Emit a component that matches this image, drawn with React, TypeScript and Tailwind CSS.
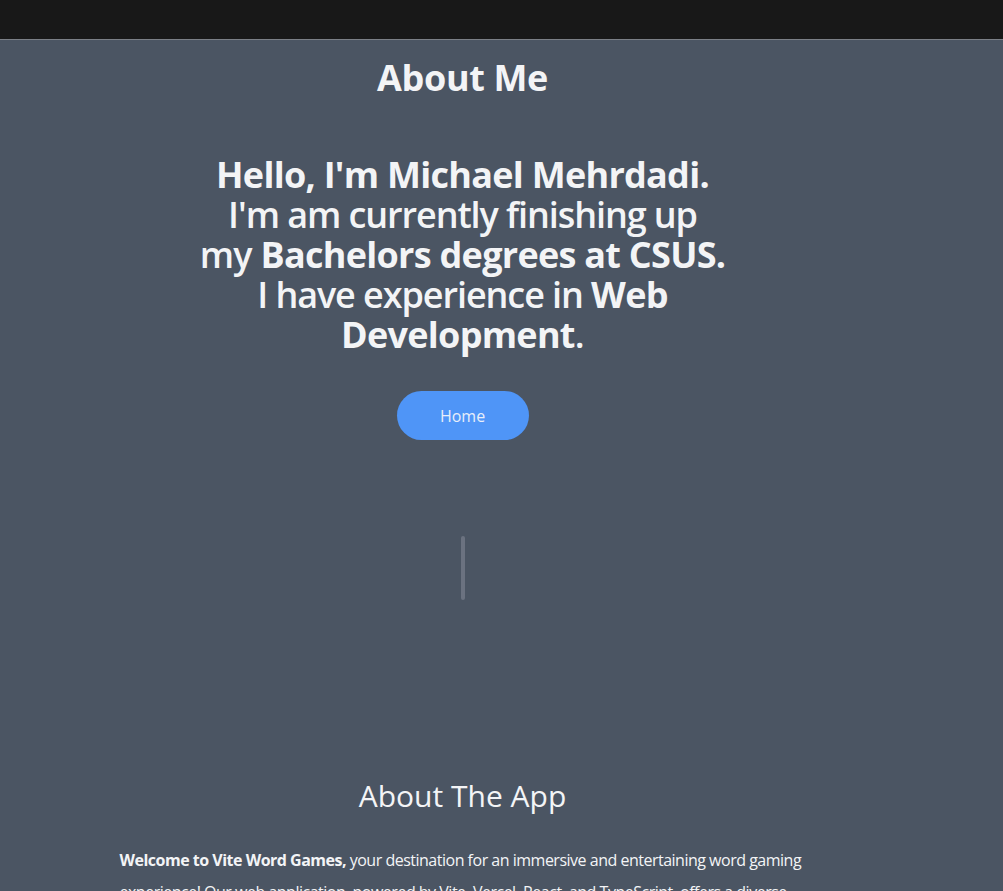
import React from "react";

export default function App() {
  return (
    <div className="min-h-[891px] bg-[#4b5563] text-[#f3f4f6]" style={{ fontFamily: '"Open Sans", "Noto Sans", sans-serif' }}>
      <div className="h-[40px] bg-[#181818] border-b border-[#7b7f86]" />
      <div className="w-[925px] flex flex-col items-center">
        <h1 className="mt-[18px] text-4xl leading-10 font-bold tracking-[-0.01em]">About Me</h1>
        <div className="mt-[57px] text-4xl leading-10 text-center tracking-[-0.02em]">
          <p className="font-bold">Hello, I'm Michael Mehrdadi.</p>
          <p className="font-semibold tracking-[-0.03em]">I'm am currently finishing up</p>
          <p className="font-semibold">my <span className="font-bold">Bachelors degrees at CSUS.</span></p>
          <p className="font-semibold"><span className="tracking-[-0.03em]">I have experience in </span><span className="font-bold">Web</span></p>
          <p className="font-semibold"><span className="font-bold">Development</span>.</p>
        </div>
        <button className="mt-[36px] w-[132px] h-[49px] rounded-full bg-[#4f95f7] text-base text-[#e8eefa]">Home</button>
        <div className="mt-[96px] w-[4px] h-[64px] rounded-full bg-[#6b7280]" />
        <h2 className="mt-[178px] text-3xl leading-9">About The App</h2>
        <p className="mt-[30px] w-[686px] text-base leading-8 tracking-[-0.031em]">
          <span className="font-bold">Welcome to Vite Word Games,</span> your destination for an immersive and entertaining word gaming experience! Our web application, powered by Vite, Vercel, React, and TypeScript, offers a diverse range of word games.
        </p>
      </div>
    </div>
  );
}
